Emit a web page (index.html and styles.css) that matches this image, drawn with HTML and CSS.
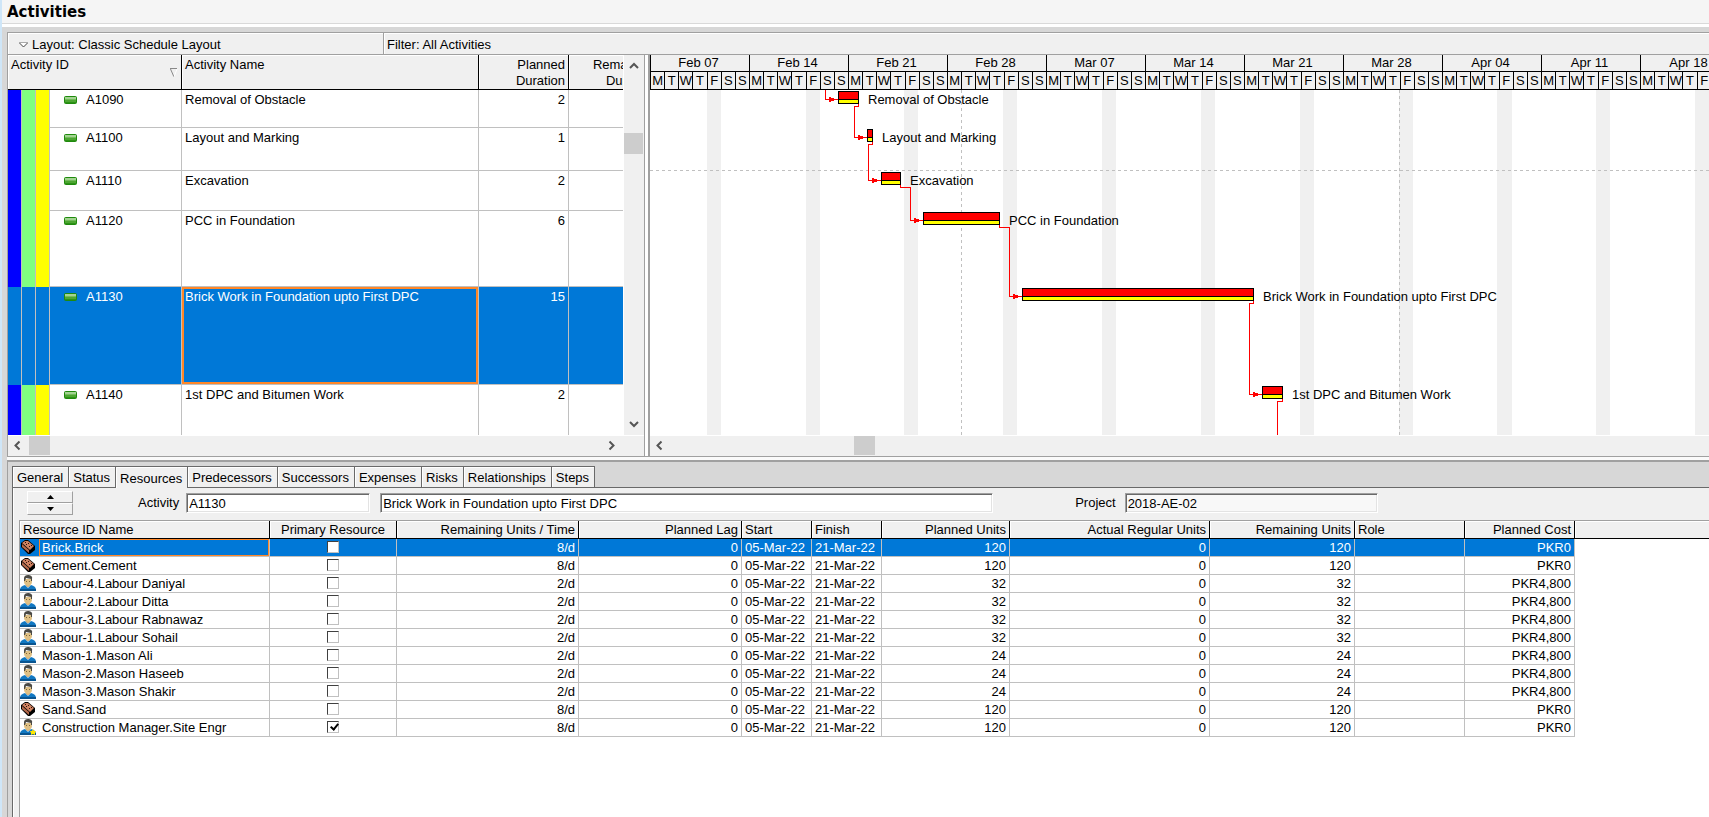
FILE: index.html
```html
<!DOCTYPE html>
<html lang="en">
<head>
    <meta charset="UTF-8">
    <meta name="viewport" content="width=device-width, initial-scale=1.0">
    <title>Activities</title>
    <link rel="stylesheet" href="styles.css">
</head>
<body>
    <!-- Shared icons -->
    <svg class="defs" aria-hidden="true">
        <symbol id="task" viewBox="0 0 13 8">
            <rect width="13" height="8" rx="2" fill="#1f8a0c"/>
            <rect x="1" y="1" width="11" height="6" fill="#4da632"/>
            <rect x="1" y="1" width="11" height="2" fill="#a3d392"/>
            <rect x="1" y="3" width="11" height="1" fill="#74bb5c"/>
            <rect x="1" y="6" width="11" height="1" fill="#2c9216"/>
        </symbol>
        <symbol id="brick" viewBox="0 0 16 16">
            <path d="M1 4 5 1h3l7 6v4l-5 4H8L1 8z" fill="#000"/>
            <path d="M2 4 5 2h3l6 5-4 4z" fill="#cf8160"/>
            <path d="M2 5l7 6v3L2 8z" fill="#b5694a"/>
            <path d="M5 3h1v1H5zM8 4h1v1H8zM6 5h1v1H6zM9 7h1v1H9zM11 6h1v1h-1z" fill="#2b1209"/>
        </symbol>
        <symbol id="person" viewBox="0 0 16 16">
            <path d="M0 15c0-3 2-4 5-5h6c3 1 5 2 5 5z" fill="#1178c2"/>
            <path d="M0 14h16v2H0z" fill="#0a5590"/>
            <path d="M5 10h6l-3 3z" fill="#e9f1f6"/>
            <path d="M6 9h4v2l-2 1-2-1z" fill="#c99f63"/>
            <path d="M4 4h8v3c0 2-2 4-4 4S4 9 4 7z" fill="#dfc084"/>
            <path d="M4 6V3c0-2 2-3 4-3s5 1 4 4v2h-1V4L6 3 5 6z" fill="#4b4a45"/>
            <path d="M6 6h1v1H6zM9 6h1v1H9z" fill="#7c6339"/>
        </symbol>
        <symbol id="star" viewBox="0 0 6 6">
            <path d="M3 0l1 2h2L5 4l0 2-2-1-2 1V4L0 2h2z" fill="#ffe800"/>
        </symbol>
        <symbol id="chevron" viewBox="0 0 10 7">
            <path d="M1 6l4-4 4 4" fill="none" stroke="#555" stroke-width="2"/>
        </symbol>
    </svg>

    <header class="page-title"><h1>Activities</h1></header>

    <main class="workspace">
        <div class="toolbar">
            <button class="layout-btn">
                <svg width="9" height="6" viewBox="0 0 9 6"><path d="M0 .5h9" stroke="#aaa"/><path d="M.5 1l4 4 4-4" fill="#fff" stroke="#444"/></svg>
                Layout: Classic Schedule Layout
            </button>
            <span class="filter">Filter: All Activities</span>
        </div>

        <div class="panes">
            <!-- Activity table -->
            <section class="activities">
                <div class="activities-body">
                    <div class="table-clip">
                        <table class="activity-table">
                            <colgroup>
                                <col class="c-band"><col class="c-band"><col class="c-band">
                                <col class="c-id"><col class="c-name"><col class="c-dur"><col class="c-rem">
                            </colgroup>
                            <thead>
                                <tr>
                                    <th colspan="4">
                                        <div class="sortable">Activity ID
                                            <svg width="8" height="10" viewBox="0 0 8 10"><path d="M0 .5h7" stroke="#888"/><path d="M.5 1 4 9" stroke="#888" fill="none"/><path d="M7 1 4 9" stroke="#fff" fill="none"/></svg>
                                        </div>
                                    </th>
                                    <th>Activity Name</th>
                                    <th class="num">Planned Duration</th>
                                    <th class="num">Remaining Duration</th>
                                </tr>
                            </thead>
                            <tbody>
                                <tr class="r38">
                                    <td class="band blue"></td><td class="band green"></td><td class="band yellow"></td>
                                    <td class="id"><svg class="task"><use href="#task"/></svg>A1090</td>
                                    <td>Removal of Obstacle</td><td class="num">2</td><td></td>
                                </tr>
                                <tr class="r43">
                                    <td class="band blue"></td><td class="band green"></td><td class="band yellow"></td>
                                    <td class="id"><svg class="task"><use href="#task"/></svg>A1100</td>
                                    <td>Layout and Marking</td><td class="num">1</td><td></td>
                                </tr>
                                <tr class="r40">
                                    <td class="band blue"></td><td class="band green"></td><td class="band yellow"></td>
                                    <td class="id"><svg class="task"><use href="#task"/></svg>A1110</td>
                                    <td>Excavation</td><td class="num">2</td><td></td>
                                </tr>
                                <tr class="r76">
                                    <td class="band blue"></td><td class="band green"></td><td class="band yellow"></td>
                                    <td class="id"><svg class="task"><use href="#task"/></svg>A1120</td>
                                    <td>PCC in Foundation</td><td class="num">6</td><td></td>
                                </tr>
                                <tr class="r98 selected">
                                    <td class="band"></td><td class="band"></td><td class="band"></td>
                                    <td class="id"><svg class="task"><use href="#task"/></svg>A1130</td>
                                    <td class="focus">Brick Work in Foundation upto First DPC</td><td class="num">15</td><td></td>
                                </tr>
                                <tr class="r50">
                                    <td class="band blue"></td><td class="band green"></td><td class="band yellow"></td>
                                    <td class="id"><svg class="task"><use href="#task"/></svg>A1140</td>
                                    <td>1st DPC and Bitumen Work</td><td class="num">2</td><td></td>
                                </tr>
                            </tbody>
                        </table>
                    </div>
                    <div class="vscroll">
                        <button aria-label="Scroll up"><svg width="10" height="7"><use href="#chevron"/></svg></button>
                        <div class="thumb"></div>
                        <button class="down" aria-label="Scroll down"><svg width="10" height="7"><use href="#chevron"/></svg></button>
                    </div>
                </div>
                <div class="hscroll">
                    <button class="left" aria-label="Scroll left"><svg width="10" height="7"><use href="#chevron"/></svg></button>
                    <div class="thumb"></div>
                    <button class="right" aria-label="Scroll right"><svg width="10" height="7"><use href="#chevron"/></svg></button>
                </div>
            </section>

            <!-- Gantt chart -->
            <section class="gantt">
                <div class="timescale" id="timescale"></div>
                <svg class="chart" height="345" shape-rendering="crispEdges">
                    <defs>
                        <g id="arrow"><path d="M0 0h2v1h3v1h2v1H5v1H2v1H0z" fill="#f00"/></g>
                    </defs>
                    <g fill="#f0f0f0">
                        <rect x="57" width="14" height="345"/>
                        <rect x="156" width="14" height="345"/>
                        <rect x="254" width="14" height="345"/>
                        <rect x="353" width="14" height="345"/>
                        <rect x="452" width="14" height="345"/>
                        <rect x="551" width="14" height="345"/>
                        <rect x="650" width="14" height="345"/>
                        <rect x="749" width="14" height="345"/>
                        <rect x="847" width="15" height="345"/>
                        <rect x="946" width="14" height="345"/>
                        <rect x="1045" width="14" height="345"/>
                    </g>
                    <g stroke="#c0c0c0" stroke-dasharray="3 3">
                        <line x1="0" y1="80.5" x2="100%" y2="80.5"/>
                        <line x1="311.5" y1="0" x2="311.5" y2="345"/>
                        <line x1="749.5" y1="0" x2="749.5" y2="345"/>
                    </g>

                    <!-- Relationship lines -->
                    <g fill="none" stroke="#f00">
                        <path d="M175.5 0V9.5H188"/>
                        <path d="M208.5 13V16.5H204.5V47.5H217"/>
                        <path d="M222.5 51V54.5H218.5V90.5H231"/>
                        <path d="M250.5 94V97.5H260.5V130.5H273"/>
                        <path d="M349.5 134V137.5H359.5V206.5H372"/>
                        <path d="M603.5 210V213.5H599.5V304.5H612"/>
                        <path d="M632.5 308V311.5H627.5V345"/>
                    </g>
                    <use href="#arrow" x="179" y="7"/>
                    <use href="#arrow" x="208" y="45"/>
                    <use href="#arrow" x="222" y="88"/>
                    <use href="#arrow" x="264" y="128"/>
                    <use href="#arrow" x="363" y="204"/>
                    <use href="#arrow" x="603" y="302"/>

                    <!-- Activity bars -->
                    <g fill="#000">
                        <rect x="188" y="1" width="21" height="13"/>
                        <rect x="217" y="39" width="6" height="13"/>
                        <rect x="231" y="82" width="20" height="13"/>
                        <rect x="273" y="122" width="77" height="13"/>
                        <rect x="372" y="198" width="232" height="13"/>
                        <rect x="612" y="296" width="21" height="13"/>
                    </g>
                    <g fill="#f00">
                        <rect x="189" y="2" width="19" height="7"/>
                        <rect x="218" y="40" width="4" height="7"/>
                        <rect x="232" y="83" width="18" height="7"/>
                        <rect x="274" y="123" width="75" height="7"/>
                        <rect x="373" y="199" width="230" height="7"/>
                        <rect x="613" y="297" width="19" height="7"/>
                    </g>
                    <g fill="#ff0">
                        <rect x="189" y="10" width="19" height="3"/>
                        <rect x="218" y="48" width="4" height="3"/>
                        <rect x="232" y="91" width="18" height="3"/>
                        <rect x="274" y="131" width="75" height="3"/>
                        <rect x="373" y="207" width="230" height="3"/>
                        <rect x="613" y="305" width="19" height="3"/>
                    </g>
                    <g class="labels">
                        <text x="218" y="14">Removal of Obstacle</text>
                        <text x="232" y="52">Layout and Marking</text>
                        <text x="260" y="95">Excavation</text>
                        <text x="359" y="135">PCC in Foundation</text>
                        <text x="613" y="211">Brick Work in Foundation upto First DPC</text>
                        <text x="642" y="309">1st DPC and Bitumen Work</text>
                    </g>
                </svg>
                <div class="hscroll">
                    <button class="left" aria-label="Scroll left"><svg width="10" height="7"><use href="#chevron"/></svg></button>
                    <div class="thumb"></div>
                </div>
            </section>
        </div>

        <!-- Activity details -->
        <section class="details">
            <div class="tabs" role="tablist">
                <button role="tab">General</button>
                <button role="tab">Status</button>
                <button role="tab" class="active" aria-selected="true">Resources</button>
                <button role="tab">Predecessors</button>
                <button role="tab">Successors</button>
                <button role="tab">Expenses</button>
                <button role="tab">Risks</button>
                <button role="tab">Relationships</button>
                <button role="tab">Steps</button>
            </div>
            <div class="tab-panel">
                <form class="activity-form">
                    <div class="spinner">
                        <button type="button" aria-label="Previous activity"><svg width="7" height="4"><path d="M3.5 0 7 4H0z"/></svg></button>
                        <button type="button" aria-label="Next activity"><svg width="7" height="4"><path d="M3.5 4 7 0H0z"/></svg></button>
                    </div>
                    <label for="activity-id">Activity</label>
                    <input type="text" id="activity-id" class="f-id" value="A1130">
                    <input type="text" class="f-name" aria-label="Activity name" value="Brick Work in Foundation upto First DPC">
                    <label for="project" class="l-project">Project</label>
                    <input type="text" id="project" class="f-project" value="2018-AE-02" readonly>
                </form>
                <div class="resources">
                    <table class="resource-table">
                        <colgroup>
                            <col class="w-name"><col class="w-primary"><col class="w-rate"><col class="w-lag">
                            <col class="w-date"><col class="w-date"><col class="w-planned"><col class="w-actual">
                            <col class="w-remaining"><col class="w-role"><col class="w-role"><col>
                        </colgroup>
                        <thead>
                            <tr>
                                <th>Resource ID Name</th>
                                <th class="mid">Primary Resource</th>
                                <th class="num">Remaining Units / Time</th>
                                <th class="num">Planned Lag</th>
                                <th>Start</th>
                                <th>Finish</th>
                                <th class="num">Planned Units</th>
                                <th class="num">Actual Regular Units</th>
                                <th class="num">Remaining Units</th>
                                <th>Role</th>
                                <th class="num">Planned Cost</th>
                                <th class="rest"></th>
                            </tr>
                        </thead>
                        <tbody id="resource-rows"></tbody>
                    </table>
                </div>
            </div>
        </section>
    </main>

    <script>
        // Timescale header: one block per week, seven day cells in each
        const weeks = ["Feb 07", "Feb 14", "Feb 21", "Feb 28", "Mar 07", "Mar 14",
                       "Mar 21", "Mar 28", "Apr 04", "Apr 11", "Apr 18"];
        const days = ["M", "T", "W", "T", "F", "S", "S"];

        document.getElementById("timescale").innerHTML = weeks.map(week =>
            `<div class="week"><div class="week-name">${week}</div>
             <div class="days">${days.map(d => `<span>${d}</span>`).join("")}</div></div>`
        ).join("");

        // Resources: name, icon, units per time, total units, cost
        const resources = [
            ["Brick.Brick", "brick", "8/d", 120, "PKR0"],
            ["Cement.Cement", "brick", "8/d", 120, "PKR0"],
            ["Labour-4.Labour Daniyal", "person", "2/d", 32, "PKR4,800"],
            ["Labour-2.Labour Ditta", "person", "2/d", 32, "PKR4,800"],
            ["Labour-3.Labour Rabnawaz", "person", "2/d", 32, "PKR4,800"],
            ["Labour-1.Labour Sohail", "person", "2/d", 32, "PKR4,800"],
            ["Mason-1.Mason Ali", "person", "2/d", 24, "PKR4,800"],
            ["Mason-2.Mason Haseeb", "person", "2/d", 24, "PKR4,800"],
            ["Mason-3.Mason Shakir", "person", "2/d", 24, "PKR4,800"],
            ["Sand.Sand", "brick", "8/d", 120, "PKR0"],
            ["Construction Manager.Site Engr", "person", "8/d", 120, "PKR0"]
        ];

        document.getElementById("resource-rows").innerHTML = resources.map((r, i) => {
            const primary = i === resources.length - 1;
            const star = primary ? '<use href="#star" x="10" y="10" width="6" height="6"/>' : "";
            return `<tr class="${i === 0 ? "selected" : ""}">
                <td class="res"><div class="res-cell">
                    <svg width="16" height="16"><use href="#${r[1]}"/>${star}</svg><span>${r[0]}</span>
                </div></td>
                <td class="mid"><input type="checkbox" aria-label="Primary resource: ${r[0]}" ${primary ? "checked" : ""}></td>
                <td class="num">${r[2]}</td>
                <td class="num">0</td>
                <td>05-Mar-22</td>
                <td>21-Mar-22</td>
                <td class="num">${r[3]}</td>
                <td class="num">0</td>
                <td class="num">${r[3]}</td>
                <td></td>
                <td class="num">${r[4]}</td>
                <td class="rest"></td>
            </tr>`;
        }).join("");
    </script>
</body>
</html>
```
FILE: styles.css
```css
* {
    box-sizing: border-box;
}

body {
    margin: 0;
    min-height: 100vh;
    display: flex;
    flex-direction: column;
    border-left: 2px solid #cfe6f8;
    background: #fff;
    color: #000;
    font: 13px/16px "Liberation Sans", Arial, sans-serif;
    overflow-x: hidden;
}

button,
input {
    font: inherit;
    color: inherit;
    margin: 0;
    padding: 0;
    border: none;
    border-radius: 0;
    background: none;
}

table {
    border-collapse: separate;
    border-spacing: 0;
    table-layout: fixed;
}

th {
    font-weight: normal;
    text-align: left;
    background: #f0f0f0;
}

.defs {
    position: absolute;
    width: 0;
    height: 0;
}

.num {
    text-align: right;
}

.mid {
    text-align: center;
}

/* Title */
.page-title {
    height: 24px;
    padding: 3px 0 0 5px;
    background: #f5f5f5;
    border-bottom: 1px solid #d9d9d9;
}

.page-title h1 {
    margin: 0;
    font: bold 15px/18px "DejaVu Sans", Verdana, sans-serif;
}

.workspace {
    flex: 1;
    display: flex;
    flex-direction: column;
    margin-top: 3px;
    padding: 5px 0 0 5px;
    background: #d7d7d7;
}

.toolbar,
.panes,
.details {
    border-left: 1px solid #a0a0a0;
}

.toolbar {
    display: flex;
    height: 23px;
    border-top: 1px solid #a0a0a0;
    border-bottom: 1px solid #a0a0a0;
    background: #f0f0f0;
    box-shadow: inset 1px 1px #fff;
}

.layout-btn {
    display: flex;
    align-items: center;
    gap: 4px;
    width: 376px;
    padding: 2px 0 0 11px;
    border-right: 1px solid #a0a0a0;
}

.filter {
    flex: 1;
    padding: 4px 0 0 2px;
    border-left: 1px solid #fff;
}

/* Upper panes */
.panes {
    display: flex;
    background: #fff;
    border-bottom: 1px solid #a0a0a0;
}

.activities {
    flex: none;
    width: 637px;
    border-right: 1px solid #a0a0a0;
}

.activities-body {
    display: flex;
}

.table-clip {
    flex: 1;
    min-width: 0;
    overflow: hidden;
    border-right: 1px solid #fff;
}

.activity-table {
    width: 651px;
}

.c-band { width: 14px; }
.c-id { width: 132px; }
.c-name { width: 297px; }
.c-dur { width: 90px; }
.c-rem { width: 90px; }

.activity-table th {
    height: 35px;
    padding: 2px 3px 0;
    vertical-align: top;
    border-right: 1px solid #000;
    border-bottom: 1px solid #000;
    box-shadow: inset 1px 1px #fff;
}

.sortable {
    display: flex;
    justify-content: space-between;
}

.sortable svg {
    margin-top: 11px;
}

.activity-table td {
    padding: 2px 3px 0;
    vertical-align: top;
    border-right: 1px solid #c0c0c0;
    border-bottom: 1px solid #c0c0c0;
}

.activity-table .band {
    padding: 0;
    border-bottom: none;
}

.activity-table .id {
    padding-left: 14px;
}

.blue { background: #00f; }
.green { background: #80ff80; }
.yellow { background: #ff0; }

.task {
    width: 13px;
    height: 8px;
    margin-right: 9px;
}

.r38 { height: 38px; }
.r43 { height: 43px; }
.r40 { height: 40px; }
.r76 { height: 76px; }
.r98 { height: 98px; }
.r50 { height: 50px; }

.r50 td {
    border-bottom: none;
}

.selected td {
    background: #0078d7;
    color: #fff;
}

.activity-table .focus {
    box-shadow: inset 0 0 0 2px #ff8728;
}

/* Scrollbars */
.vscroll {
    display: flex;
    flex-direction: column;
    width: 20px;
    background: #f0f0f0;
}

.vscroll button {
    height: 20px;
}

.vscroll .thumb {
    height: 21px;
    width: 19px;
    margin-top: 58px;
    background: #cdcdcd;
}

.vscroll .down {
    margin-top: auto;
    transform: rotate(180deg);
}

.vscroll button,
.hscroll button {
    display: flex;
    align-items: center;
    justify-content: center;
}

.hscroll {
    display: flex;
    height: 21px;
    border-top: 1px solid #fff;
    background: #f0f0f0;
}

.hscroll button {
    width: 21px;
    height: 19px;
    padding-right: 3px;
}

.hscroll .left svg {
    transform: rotate(-90deg);
}

.hscroll .right {
    margin-left: auto;
    margin-right: 20px;
}

.hscroll .right svg {
    transform: rotate(90deg);
}

.hscroll .thumb {
    width: 21px;
    height: 19px;
    background: #cdcdcd;
}

.gantt .hscroll .thumb {
    margin-left: 183px;
}

/* Gantt */
.gantt {
    flex: 1;
    min-width: 0;
    margin-left: 3px;
    border-left: 2px solid #a0a0a0;
    overflow: hidden;
}

.timescale {
    display: flex;
    overflow: hidden;
    background: #f0f0f0;
}

.week {
    flex: none;
    width: 99px;
    text-align: center;
}

.week-name {
    height: 17px;
    padding-right: 3px;
    line-height: 15px;
    border-left: 1px solid #000;
    border-bottom: 1px solid #000;
}

.days {
    display: grid;
    grid-template-columns: repeat(7, minmax(0, 1fr));
    height: 18px;
    line-height: 17px;
    border-bottom: 1px solid #000;
}

.days span {
    border-left: 1px solid #000;
}

.chart {
    display: block;
    width: 100%;
}

.labels {
    fill: #000;
}

/* Details */
.details {
    flex: 1;
    display: flex;
    flex-direction: column;
    margin-top: 3px;
    padding: 4px 0 0 4px;
    border-top: 2px solid #a0a0a0;
    box-shadow: 0 -3px #fafafa;
}

.tabs {
    display: flex;
    height: 22px;
    border-left: 1px solid #696969;
    border-bottom: 1px solid #696969;
}

.tabs button {
    height: 21px;
    padding: 2px 5px 0 4px;
    border-top: 1px solid #696969;
    border-right: 1px solid #696969;
    background: #f0f0f0;
    box-shadow: inset 1px 1px #fff;
}

.tabs .active {
    height: 22px;
}

.tab-panel {
    flex: 1;
    display: flex;
    flex-direction: column;
    padding: 3px 0 0 6px;
    border-left: 1px solid #696969;
    background: #f0f0f0;
    box-shadow: inset 1px 0 #fff;
}

.activity-form {
    display: flex;
    align-items: center;
    height: 24px;
    padding-left: 8px;
    margin-bottom: 5px;
}

.spinner {
    display: flex;
    flex-direction: column;
    width: 46px;
    margin-right: 65px;
}

.spinner button {
    display: flex;
    align-items: center;
    justify-content: center;
    height: 12px;
    border: 1px solid #fff;
    border-right-color: #a0a0a0;
    border-bottom-color: #a0a0a0;
}

.activity-form input {
    height: 20px;
    padding: 0 2px;
    border: 1px solid #a0a0a0;
    border-right-color: #fff;
    border-bottom-color: #fff;
    background: #fff;
    box-shadow: inset 1px 1px #696969, inset -1px -1px #e3e3e3;
}

.activity-form .f-id {
    width: 184px;
    margin: 0 10px 0 7px;
}

.activity-form .f-name {
    flex: 0 1 613px;
    min-width: 0;
}

.l-project {
    margin: 0 9px 0 82px;
}

.activity-form .f-project {
    width: 253px;
    background: #f8f8f8;
}

/* Resource table */
.resources {
    flex: 1;
    border-top: 1px solid #a0a0a0;
    border-left: 1px solid #a0a0a0;
    background: #fff;
    overflow: hidden;
}

.resource-table {
    width: 100%;
}

.w-name { width: 250px; }
.w-primary { width: 127px; }
.w-rate { width: 182px; }
.w-lag { width: 163px; }
.w-date { width: 70px; }
.w-planned { width: 128px; }
.w-actual { width: 200px; }
.w-remaining { width: 145px; }
.w-role { width: 110px; }

.resource-table th,
.resource-table td {
    height: 18px;
    padding: 1px 3px 0;
    white-space: nowrap;
    border-right: 1px solid #c0c0c0;
    border-bottom: 1px solid #c0c0c0;
}

.resource-table th {
    border-color: #000;
    box-shadow: inset 1px 1px #fff;
}

.resource-table .res {
    padding: 0;
}

.res-cell {
    display: flex;
    height: 17px;
}

.res-cell span {
    flex: 1;
    margin-left: 3px;
    padding: 1px 0 0 3px;
}

.selected .res-cell span {
    padding: 0 0 0 2px;
    border: 1px solid #ff8728;
}

.resource-table .rest {
    border-right: none;
}

.resource-table td.rest {
    border-bottom: none;
    background: #fff;
}

.resource-table input {
    appearance: none;
    display: block;
    width: 12px;
    height: 12px;
    margin: 0 auto 2px;
    border: 1px solid #404040;
    border-right-color: #c0c0c0;
    border-bottom-color: #c0c0c0;
    background: #fff;
}

.resource-table input:checked::before {
    content: "";
    display: block;
    width: 3px;
    height: 6px;
    margin: 0 0 0 4px;
    border: solid #000;
    border-width: 0 2px 2px 0;
    transform: rotate(40deg);
}
```
